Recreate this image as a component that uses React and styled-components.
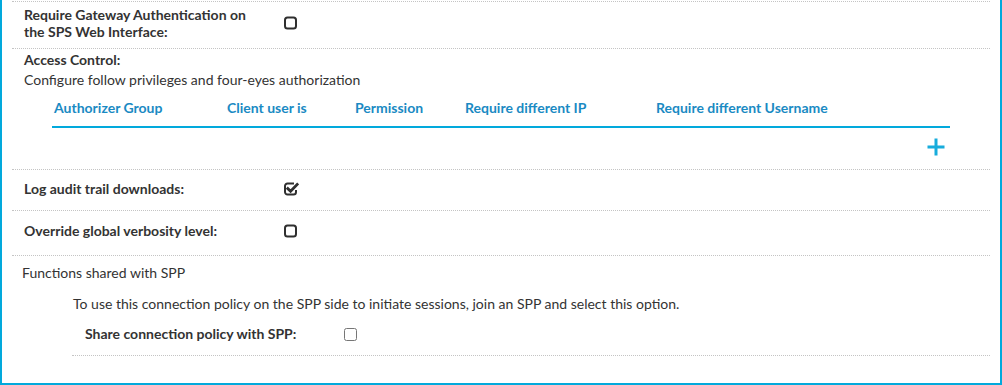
import React from "react";
import styled, { createGlobalStyle } from "styled-components";

const GlobalStyle = createGlobalStyle`
  html, body { margin: 0; padding: 0; background: #fff; }
  body {
    font-family: Lato, "Open Sans", "Liberation Sans", sans-serif;
    font-size: 14px;
    line-height: 16px;
    color: #333;
  }
`;

const Panel = styled.div`
  width: 1002px;
  height: 385px;
  box-sizing: border-box;
  border: 2px solid #02a9dc;
  border-top: none;
  padding: 1px 10px 0 10px;
  background: #fff;
`;

const Row = styled.div`
  display: flex;
  align-items: center;
  border-top: 1px dotted #c4c4c4;
  padding: ${(p) => p.$pad || "12px 0"};
  padding-left: 12px;
`;

const Label = styled.div`
  width: ${(p) => p.$w || 260}px;
  line-height: ${(p) => p.$lh || 16}px;
  flex: none;
  font-weight: 700;
`;

const Section = styled.div`
  border-top: 1px dotted #c4c4c4;
  padding: 3px 0 0 12px;
`;

const Title = styled.div`
  font-weight: ${(p) => (p.$bold ? 700 : 400)};
`;

const Desc = styled.div`
  margin-top: 4px;
`;

const Table = styled.div`
  margin: 12px 40px 0 28px;
`;

const HeaderRow = styled.div`
  display: grid;
  grid-template-columns: 173px 128px 110px 191px 1fr;
  border-bottom: 2px solid #02a9dc;
  padding-bottom: 10px;
`;

const HeaderCell = styled.div`
  padding-left: 2px;
  font-weight: 700;
  color: #1a8ac3;
  white-space: nowrap;
`;

const AddBar = styled.div`
  display: flex;
  justify-content: flex-end;
  padding: 10px 5px 13px 0;
`;

const AddButton = styled.button`
  border: none;
  background: none;
  padding: 0;
  width: 18px;
  height: 18px;
  cursor: pointer;
  display: block;
`;

const Box = styled.span`
  display: inline-flex;
  width: 15px;
  height: 14px;
  flex: none;
`;

const Spacer = styled.span`
  width: ${(p) => p.$w}px;
  flex: none;
`;

const SppSection = styled.div`
  border-top: 1px dotted #c4c4c4;
  padding: 9px 0 27px 10px;
`;

const SppBody = styled.div`
  margin-left: 51px;
  margin-top: 15px;
`;

const SppRow = styled.div`
  display: flex;
  align-items: center;
  margin-top: 14px;
  margin-left: -1px;
  padding: 0 0 13px 13px;
  border-bottom: 1px dotted #c4c4c4;
`;

const NativeCheck = styled.input`
  margin: 0;
  width: 13px;
  height: 13px;
`;

function SquareIcon() {
  return (
    <Box>
      <svg width="15" height="14" viewBox="0 0 15 14">
        <rect x="1" y="1.5" width="11" height="11" rx="2.5" fill="none" stroke="#2f2f2f" strokeWidth="2" />
      </svg>
    </Box>
  );
}

function CheckedIcon() {
  return (
    <Box>
      <svg width="15" height="14" viewBox="0 0 15 14">
        <path d="M10 1.5 H3.5 A2.5 2.5 0 0 0 1 4 V10 A2.5 2.5 0 0 0 3.5 12.5 H9.5 A2.5 2.5 0 0 0 12 10 V8" fill="none" stroke="#2f2f2f" strokeWidth="2" />
        <path d="M3.8 6.6 L6.6 9.3 L13.2 2.4" fill="none" stroke="#2f2f2f" strokeWidth="2.8" strokeLinecap="square" />
      </svg>
    </Box>
  );
}

function PlusIcon() {
  return (
    <svg width="18" height="18" viewBox="0 0 18 18">
      <path d="M9 0.5 V17.5 M0.5 9 H17.5" stroke="#17acdc" strokeWidth="3" />
    </svg>
  );
}

const headers = [
  "Authorizer Group",
  "Client user is",
  "Permission",
  "Require different IP",
  "Require different Username",
];

export default function App() {
  return (
    <>
      <GlobalStyle />
      <Panel>
        <Row $pad="4px 0 8px">
          <Label $w={240} $lh={17}>Require Gateway Authentication on the SPS Web Interface:</Label>
          <Spacer $w={20} />
          <SquareIcon />
        </Row>
        <Section>
          <Title $bold>Access Control:</Title>
          <Desc>Configure follow privileges and four-eyes authorization</Desc>
          <Table>
            <HeaderRow>
              {headers.map((h) => (
                <HeaderCell key={h}>{h}</HeaderCell>
              ))}
            </HeaderRow>
            <AddBar>
              <AddButton aria-label="Add">
                <PlusIcon />
              </AddButton>
            </AddBar>
          </Table>
        </Section>
        <Row $pad="11px 0 13px">
          <Label>Log audit trail downloads:</Label>
          <CheckedIcon />
        </Row>
        <Row $pad="12px 0 16px">
          <Label>Override global verbosity level:</Label>
          <SquareIcon />
        </Row>
        <SppSection>
          <Title>Functions shared with SPP</Title>
          <SppBody>
            <div>To use this connection policy on the SPP side to initiate sessions, join an SPP and select this option.</div>
            <SppRow>
              <Label $w={259}>Share connection policy with SPP:</Label>
              <NativeCheck type="checkbox" />
            </SppRow>
          </SppBody>
        </SppSection>
      </Panel>
    </>
  );
}
